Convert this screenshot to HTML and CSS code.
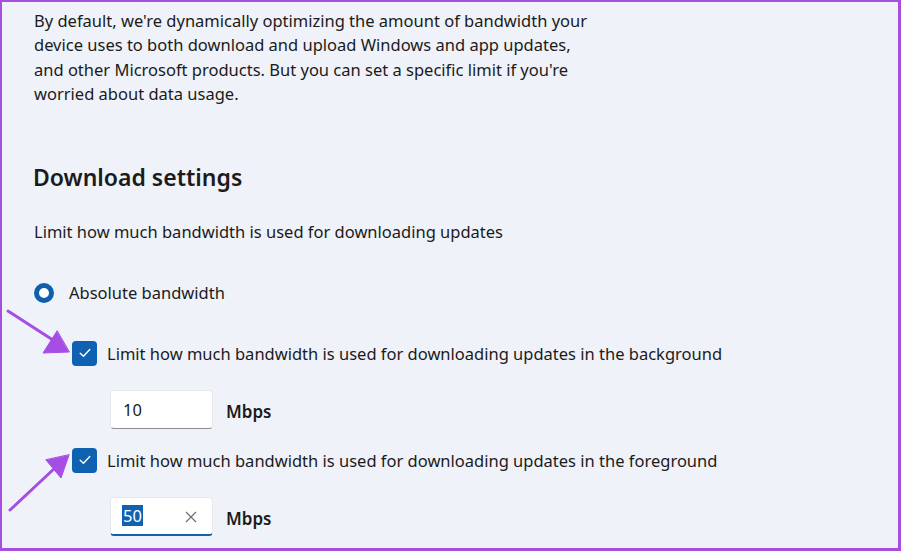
FILE: index.html
```html
<!DOCTYPE html>
<html lang="en">
<head>
    <meta charset="UTF-8">
    <title>Delivery Optimization - Advanced options</title>
    <link rel="stylesheet" href="styles.css">
</head>
<body>

<div class="frame">
    <p class="intro">By default, we're dynamically optimizing the amount of bandwidth your device uses to both download and upload Windows and app updates, and other Microsoft products. But you can set a specific limit if you're worried about data usage.</p>

    <h2 class="section-title">Download settings</h2>
    <p class="subtitle">Limit how much bandwidth is used for downloading updates</p>

    <div class="radio-row">
        <span class="radio"></span>
        <span>Absolute bandwidth</span>
    </div>

    <div class="check-row first">
        <span class="checkbox">
            <svg width="12" height="10" viewBox="0 0 12 10"><path d="M1.2 5.2 L4.4 8.2 L10.8 1.6" fill="none" stroke="#fff" stroke-width="1.4" stroke-linecap="round" stroke-linejoin="round"/></svg>
        </span>
        <span>Limit how much bandwidth is used for downloading updates in the background</span>
    </div>
    <div class="input-row">
        <div class="field"><span class="value">10</span></div>
        <span class="unit">Mbps</span>
    </div>

    <div class="check-row second">
        <span class="checkbox">
            <svg width="12" height="10" viewBox="0 0 12 10"><path d="M1.2 5.2 L4.4 8.2 L10.8 1.6" fill="none" stroke="#fff" stroke-width="1.4" stroke-linecap="round" stroke-linejoin="round"/></svg>
        </span>
        <span>Limit how much bandwidth is used for downloading updates in the foreground</span>
    </div>
    <div class="input-row">
        <div class="field focused">
            <span class="value selected">50</span>
            <svg class="clear" width="12" height="12" viewBox="0 0 12 12"><path d="M1 1 L11 11 M11 1 L1 11" stroke="#6b6b6b" stroke-width="1.1"/></svg>
        </div>
        <span class="unit">Mbps</span>
    </div>

    <!-- annotation arrows -->
    <svg class="arrows" width="901" height="551" viewBox="0 0 901 551">
        <g fill="#a64de6" stroke="#a64de6" stroke-linecap="round">
            <path d="M8 311 L56 342" stroke-width="3" fill="none"/>
            <path d="M69 352 L43 353 L57 331 Z"/>
            <path d="M10 510 L56 467" stroke-width="3" fill="none"/>
            <path d="M69 455 L61 478 L46 460 Z"/>
        </g>
    </svg>
</div>

</body>
</html>
```

FILE: styles.css
```css
body {
    margin: 0;
    font-family: "Noto Sans", "Open Sans", sans-serif;
    color: #1b1b1b;
}

.frame {
    position: relative;
    box-sizing: border-box;
    width: 901px;
    height: 551px;
    overflow: hidden;
    background-color: #eff2f9;
    border: 2px solid #a64fdf;
    border-right-width: 3px;
    border-bottom-width: 3px;
    padding: 7px 0 0 32px;
}

.intro {
    margin: 0;
    width: 560px;
    font-size: 16.5px;
    line-height: 24.4px;
}

.section-title {
    margin: 54px 0 0 -1px;
    font-size: 23px;
    font-weight: 600;
    line-height: 32px;
}

.subtitle {
    margin: 27px 0 0 0;
    font-size: 16.5px;
    line-height: 24px;
}

.radio-row {
    display: flex;
    align-items: center;
    gap: 15px;
    margin-top: 37px;
    height: 24px;
    font-size: 16.5px;
}

.radio {
    box-sizing: border-box;
    width: 20px;
    height: 20px;
    border-radius: 50%;
    border: 5px solid #0f5fad;
    background: #fff;
}

.check-row {
    display: flex;
    align-items: center;
    gap: 10px;
    height: 25px;
    padding-left: 38px;
    font-size: 16.5px;
}

.check-row.first {
    margin-top: 36px;
}

.check-row.second {
    margin-top: 19px;
}

.checkbox {
    display: flex;
    align-items: center;
    justify-content: center;
    width: 25px;
    height: 25px;
    border-radius: 4px;
    background-color: #0f62b1;
}

.input-row {
    display: flex;
    align-items: center;
    gap: 13px;
    margin-top: 24px;
    padding-left: 76px;
}

.field {
    position: relative;
    box-sizing: border-box;
    display: flex;
    align-items: center;
    width: 103px;
    height: 39px;
    padding-left: 12px;
    background: #fff;
    border: 1px solid #e6e8ec;
    border-bottom: 1px solid #8a8d92;
    border-radius: 4px;
    font-size: 16.5px;
}

.field.focused {
    border-bottom: 2px solid #0f62b1;
}

.value.selected {
    background-color: #0f62b1;
    color: #fff;
    line-height: 21px;
    padding: 0 1px;
    margin-left: -1px;
}

.clear {
    position: absolute;
    right: 15px;
    top: 13px;
}

.unit {
    font-size: 17px;
    font-weight: 600;
    padding-top: 5px;
}

.arrows {
    position: absolute;
    left: -2px;
    top: -2px;
    pointer-events: none;
}
```
